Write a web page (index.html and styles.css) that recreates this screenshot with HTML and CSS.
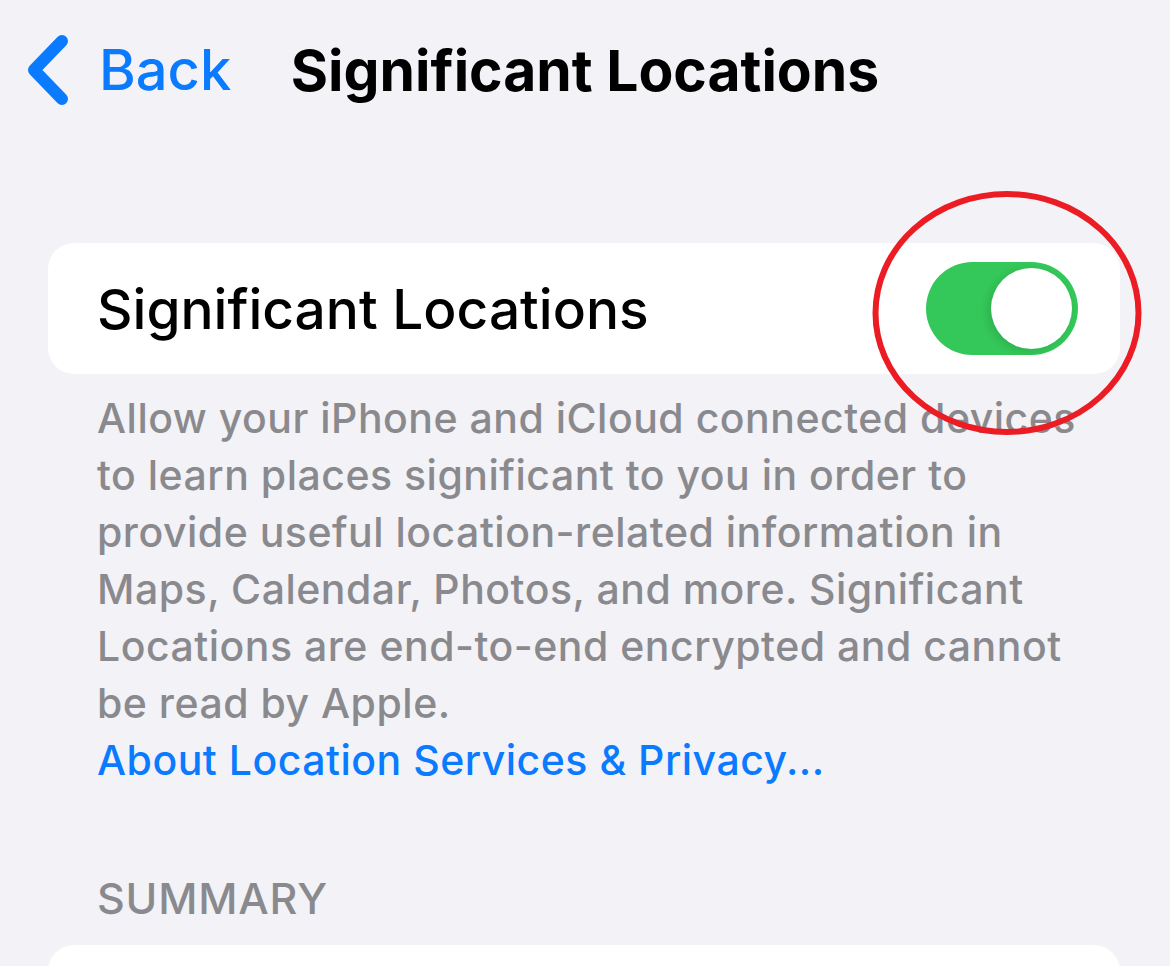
FILE: index.html
```html
<!DOCTYPE html>
<html lang="en">
<head>
    <meta charset="UTF-8">
    <meta name="viewport" content="width=device-width, initial-scale=1.0">
    <title>Significant Locations</title>
    <link rel="stylesheet" href="styles.css">
</head>
<body>
    <header class="navbar">
        <a class="back" href="#">
            <svg class="chevron" width="44" height="70" viewBox="0 0 44 70">
                <path d="M34 6 L6 35 L34 64" fill="none" stroke="#0a7aff" stroke-width="12" stroke-linecap="round" stroke-linejoin="round"/>
            </svg>
            <span>Back</span>
        </a>
        <h1>Significant Locations</h1>
        <div></div>
    </header>
    <main>
        <div class="card">
            <span class="label">Significant Locations</span>
            <div class="toggle on"><div class="knob"></div></div>
            <svg class="annotation" width="280" height="252" viewBox="0 0 280 252">
                <ellipse cx="140" cy="126" rx="131.5" ry="119" fill="none" stroke="#ec1c24" stroke-width="6"/>
            </svg>
        </div>
        <p class="footer-text">
            Allow your iPhone and iCloud connected devices to learn places significant to you in order to provide useful location-related information in Maps, Calendar, Photos, and more. Significant Locations are end-to-end encrypted and cannot be read by Apple.
            <br><a href="#">About Location Services &amp; Privacy...</a>
        </p>
        <h2 class="section-title">SUMMARY</h2>
        <div class="card summary"></div>
    </main>
</body>
</html>
```

FILE: styles.css
```css
body {
    font-family: Inter, "Noto Sans", sans-serif;
    margin: 0;
    padding: 0;
    background-color: #f2f2f7;
    color: #000;
    overflow: hidden;
}

.navbar {
    display: grid;
    grid-template-columns: 1fr auto 1fr;
    align-items: center;
    height: 140px;
}

.back {
    display: flex;
    align-items: center;
    color: #0a7aff;
    text-decoration: none;
    font-size: 56px;
    font-weight: 500;
    padding-left: 28px;
    gap: 27px;
}

.chevron {
    display: block;
}

.navbar h1 {
    margin: 0;
    font-size: 57px;
    font-weight: 700;
}

main {
    padding: 103px 50px 0 48px;
}

.card {
    position: relative;
    background-color: #fff;
    border-radius: 26px;
    height: 131px;
    display: flex;
    align-items: center;
    justify-content: space-between;
    padding: 0 42px 0 49px;
}

.label {
    font-size: 55px;
    font-weight: 500;
}

.toggle {
    width: 152px;
    height: 93px;
    border-radius: 47px;
    background-color: #e9e9eb;
    position: relative;
}

.toggle.on {
    background-color: #34c759;
}

.knob {
    position: absolute;
    top: 6px;
    right: 6px;
    width: 81px;
    height: 81px;
    border-radius: 50%;
    background-color: #fff;
    box-shadow: -3px 2px 8px rgba(0, 0, 0, 0.12);
}

.annotation {
    position: absolute;
    right: -27px;
    top: -56px;
    pointer-events: none;
}

.footer-text {
    margin: 16px 40px 0 49px;
    font-size: 41px;
    font-weight: 500;
    letter-spacing: 0.5px;
    line-height: 57px;
    color: #8a8a8e;
}

.footer-text a {
    color: #0a7aff;
    text-decoration: none;
}

.section-title {
    margin: 84px 0 0 49px;
    font-size: 43px;
    font-weight: 500;
    letter-spacing: 0.8px;
    line-height: 50px;
    color: #8a8a8e;
}

.summary {
    margin-top: 22px;
    height: 120px;
}
```
